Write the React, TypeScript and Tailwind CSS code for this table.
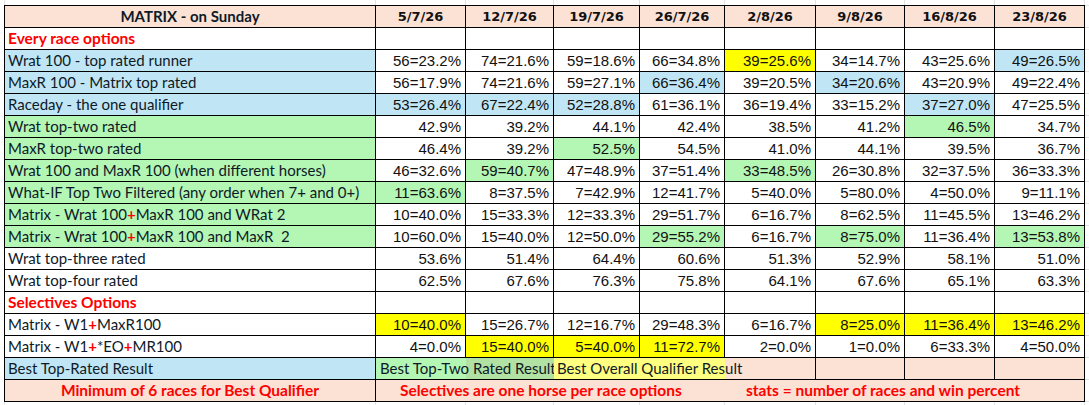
import React from 'react';

const WC = ['w-[371px]', 'w-[90px]', 'w-[88px]', 'w-[86px]', 'w-[85px]', 'w-[91px]', 'w-[89px]', 'w-[90px]', 'w-[90px]'];
const STRIP = ['w-[5px]', ...WC];

const BG: Record<string, string> = {
  w: 'bg-white',
  b: 'bg-[#c0e6f5]',
  g: 'bg-[#b4f6b4]',
  y: 'bg-[#ffff00]',
  p: 'bg-[#fbe2d5]',
};

const LABEL = "font-['Lato',sans-serif] text-[15px] text-[#0e1a28]";
const NUM = "font-['Liberation_Sans',Arial,sans-serif] text-[15px] text-[#111111]";
const RED = "font-['Lato',sans-serif] font-bold text-[15.5px] text-[#ff0000]";

const dates = ['5/7/26', '12/7/26', '19/7/26', '26/7/26', '2/8/26', '9/8/26', '16/8/26', '23/8/26'];

const Plus = () => <span className="font-bold text-[#ff0000]">+</span>;

type Row = { label?: React.ReactNode; bg?: string; section?: string; cells?: string[] };

// cell strings: "value|colour"
const rows: Row[] = [
  { section: 'Every race options' },
  { label: 'Wrat 100 - top rated runner', bg: 'b', cells: ['56=23.2%', '74=21.6%', '59=18.6%', '66=34.8%', '39=25.6%|y', '34=14.7%', '43=25.6%', '49=26.5%|b'] },
  { label: 'MaxR 100 - Matrix top rated', bg: 'b', cells: ['56=17.9%', '74=21.6%', '59=27.1%', '66=36.4%|b', '39=20.5%', '34=20.6%|b', '43=20.9%', '49=22.4%'] },
  { label: 'Raceday - the one qualifier', bg: 'b', cells: ['53=26.4%|b', '67=22.4%|b', '52=28.8%|b', '61=36.1%', '36=19.4%', '33=15.2%', '37=27.0%|b', '47=25.5%'] },
  { label: 'Wrat top-two rated', bg: 'g', cells: ['42.9%', '39.2%', '44.1%', '42.4%', '38.5%', '41.2%', '46.5%|g', '34.7%'] },
  { label: 'MaxR top-two rated', bg: 'g', cells: ['46.4%', '39.2%', '52.5%|g', '54.5%', '41.0%', '44.1%', '39.5%', '36.7%'] },
  { label: 'Wrat 100 and MaxR 100 (when different horses)', bg: 'g', cells: ['46=32.6%', '59=40.7%|g', '47=48.9%', '37=51.4%', '33=48.5%|g', '26=30.8%', '32=37.5%', '36=33.3%'] },
  { label: 'What-IF Top Two Filtered (any order when 7+ and 0+)', bg: 'g', cells: ['11=63.6%|g', '8=37.5%', '7=42.9%', '12=41.7%', '5=40.0%', '5=80.0%', '4=50.0%', '9=11.1%'] },
  { label: <>Matrix - Wrat 100<Plus />MaxR 100 and WRat 2</>, bg: 'g', cells: ['10=40.0%', '15=33.3%', '12=33.3%', '29=51.7%', '6=16.7%', '8=62.5%', '11=45.5%', '13=46.2%'] },
  { label: <>Matrix - Wrat 100<Plus />MaxR 100 and MaxR&nbsp;&nbsp;2</>, bg: 'g', cells: ['10=60.0%', '15=40.0%', '12=50.0%', '29=55.2%|g', '6=16.7%', '8=75.0%|g', '11=36.4%', '13=53.8%|g'] },
  { label: 'Wrat top-three rated', bg: 'w', cells: ['53.6%', '51.4%', '64.4%', '60.6%', '51.3%', '52.9%', '58.1%', '51.0%'] },
  { label: 'Wrat top-four rated', bg: 'w', cells: ['62.5%', '67.6%', '76.3%', '75.8%', '64.1%', '67.6%', '65.1%', '63.3%'] },
  { section: 'Selectives Options' },
  { label: <>Matrix - W1<Plus />MaxR100</>, bg: 'w', cells: ['10=40.0%|y', '15=26.7%', '12=16.7%', '29=48.3%', '6=16.7%', '8=25.0%|y', '11=36.4%|y', '13=46.2%|y'] },
  { label: <>Matrix - W1<Plus />*EO<Plus />MR100</>, bg: 'w', cells: ['4=0.0%', '15=40.0%|y', '5=40.0%|y', '11=72.7%|y', '2=0.0%', '1=0.0%', '6=33.3%', '4=50.0%'] },
];

function GridStrip({ h }: { h: string }) {
  return (
    <div className={`flex ${h}`}>
      {STRIP.map((w, i) => (
        <div key={i} className={`${w} shrink-0 border-r border-[#e2e2e2]`} />
      ))}
    </div>
  );
}

function DataRow({ row }: { row: Row }) {
  if (row.section) {
    return (
      <div className="flex h-[22px] border-b border-black bg-white">
        <div className={`${WC[0]} shrink-0 border-r border-black flex items-end pl-[3px] pb-[3px] leading-none ${RED}`}>{row.section}</div>
        {WC.slice(1).map((w, i) => (
          <div key={i} className={`${w} shrink-0 border-r border-black`} />
        ))}
      </div>
    );
  }
  return (
    <div className="flex h-[22px] border-b border-black bg-white">
      <div className={`${WC[0]} shrink-0 border-r border-black flex items-end pl-[3px] pb-[3px] leading-none whitespace-nowrap ${LABEL} ${BG[row.bg || 'w']}`}>
        {row.label}
      </div>
      {row.cells!.map((c, i) => {
        const [v, col] = c.split('|');
        return (
          <div key={i} className={`${WC[i + 1]} shrink-0 border-r border-black flex items-end justify-end pr-[4px] pb-[3px] leading-none ${NUM} ${BG[col || 'w']}`}>
            {v}
          </div>
        );
      })}
    </div>
  );
}

export default function App() {
  return (
    <div className="w-[1089px] h-[405px] bg-white flex flex-col overflow-hidden">
      <GridStrip h="h-[5px]" />
      <div className="flex">
        <div className="w-[4px] shrink-0" />
        <div className="w-[1081px] shrink-0 border-l border-t border-black">
          {/* header */}
          <div className="flex h-[22px] border-b border-black bg-[#fbe2d5]">
            <div className={`${WC[0]} shrink-0 border-r border-black flex items-end justify-center pb-[3px] leading-none font-['Lato',sans-serif] font-bold text-[15px] text-[#0e1a28]`}>
              MATRIX - on Sunday
            </div>
            {dates.map((d, i) => (
              <div key={d} className={`${WC[i + 1]} shrink-0 border-r border-black flex items-end justify-center pb-[4px] leading-none font-['DejaVu_Sans',sans-serif] font-bold text-[13px] text-[#111111]`}>
                {d}
              </div>
            ))}
          </div>

          {rows.map((r, i) => (
            <DataRow key={i} row={r} />
          ))}

          {/* best results */}
          <div className="flex h-[22px] border-b border-black">
            <div className={`${WC[0]} shrink-0 border-r border-black flex items-end pl-[3px] pb-[3px] leading-none ${LABEL} bg-[#c0e6f5]`}>
              Best Top-Rated Result
            </div>
            <div className={`w-[178px] shrink-0 overflow-hidden whitespace-nowrap flex items-end pl-[4px] pb-[3px] leading-none ${LABEL} bg-[linear-gradient(to_right,#b4f6b4_90px,#b1e1a3_90px)]`}>
              Best Top-Two Rated Result
            </div>
            <div className={`w-[262px] shrink-0 border-r border-black whitespace-nowrap flex items-end pl-[3px] pb-[3px] leading-none ${LABEL} bg-[linear-gradient(to_right,#ffff80_171px,#fbe2d5_171px)]`}>
              Best Overall Qualifier Result
            </div>
            {WC.slice(6).map((w, i) => (
              <div key={i} className={`${w} shrink-0 border-r border-black bg-[#fbe2d5]`} />
            ))}
          </div>

          {/* footer notes */}
          <div className={`flex h-[22px] border-b border-black bg-[#fbe2d5] whitespace-nowrap ${RED}`}>
            <div className={`${WC[0]} shrink-0 border-r border-black flex items-end justify-center pb-[3px] leading-none`}>
              Minimum of 6 races for Best Qualifier
            </div>
            <div className="w-[709px] shrink-0 border-r border-black flex items-end pb-[3px] leading-none">
              <span className="w-[370px] shrink-0 pl-[24px]">Selectives are one horse per race options</span>
              <span>stats = number of races and win percent</span>
            </div>
          </div>
        </div>
        <div className="flex-1 border-t border-[#e2e2e2]">
          {Array.from({ length: 18 }).map((_, i) => (
            <div key={i} className="h-[22px] border-b border-[#e2e2e2]" />
          ))}
        </div>
      </div>
      <GridStrip h="flex-1" />
    </div>
  );
}
